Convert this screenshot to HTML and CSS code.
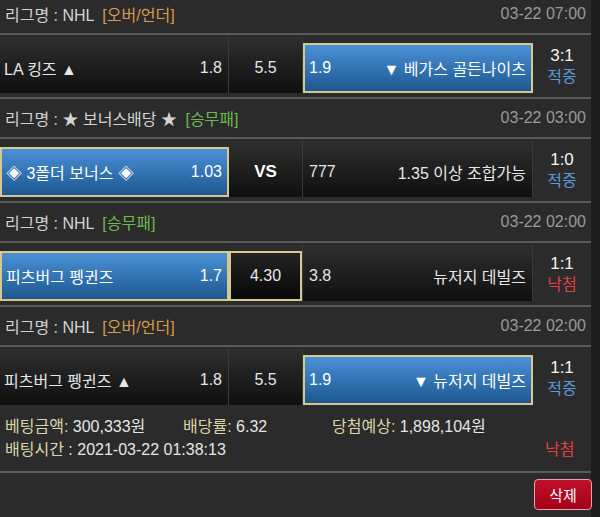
FILE: index.html
```html
<!DOCTYPE html>
<html lang="ko">
<head>
    <meta charset="UTF-8">
    <title>베팅내역</title>
    <link rel="stylesheet" href="styles.css">
</head>
<body>
    <div class="bet-list">
        <!-- 경기 1 -->
        <div class="bet-item">
            <div class="league">
                <span>리그명 : NHL <em class="type-ou">[오버/언더]</em></span>
                <span class="time">03-22 07:00</span>
            </div>
            <div class="match">
                <div class="cell home"><div class="inner"><span>LA 킹즈 ▲</span><span>1.8</span></div></div>
                <div class="cell draw"><div class="inner">5.5</div></div>
                <div class="cell away picked"><div class="inner"><span>1.9</span><span>▼ 베가스 골든나이츠</span></div></div>
                <div class="result"><b>3:1</b><span class="win">적중</span></div>
            </div>
        </div>

        <!-- 경기 2 -->
        <div class="bet-item">
            <div class="league">
                <span>리그명 : ★ 보너스배당 ★ <em class="type-wdl">[승무패]</em></span>
                <span class="time">03-22 03:00</span>
            </div>
            <div class="match">
                <div class="cell home picked"><div class="inner"><span>◈ 3폴더 보너스 ◈</span><span>1.03</span></div></div>
                <div class="cell draw"><div class="inner vs">VS</div></div>
                <div class="cell away"><div class="inner"><span>777</span><span>1.35 이상 조합가능</span></div></div>
                <div class="result"><b>1:0</b><span class="win">적중</span></div>
            </div>
        </div>

        <!-- 경기 3 -->
        <div class="bet-item">
            <div class="league">
                <span>리그명 : NHL <em class="type-wdl">[승무패]</em></span>
                <span class="time">03-22 02:00</span>
            </div>
            <div class="match">
                <div class="cell home picked"><div class="inner"><span>피츠버그 펭귄즈</span><span>1.7</span></div></div>
                <div class="cell draw picked-dark"><div class="inner">4.30</div></div>
                <div class="cell away"><div class="inner"><span>3.8</span><span>뉴저지 데빌즈</span></div></div>
                <div class="result"><b>1:1</b><span class="lose">낙첨</span></div>
            </div>
        </div>

        <!-- 경기 4 -->
        <div class="bet-item">
            <div class="league">
                <span>리그명 : NHL <em class="type-ou">[오버/언더]</em></span>
                <span class="time">03-22 02:00</span>
            </div>
            <div class="match">
                <div class="cell home"><div class="inner"><span>피츠버그 펭귄즈 ▲</span><span>1.8</span></div></div>
                <div class="cell draw"><div class="inner">5.5</div></div>
                <div class="cell away picked"><div class="inner"><span>1.9</span><span>▼ 뉴저지 데빌즈</span></div></div>
                <div class="result"><b>1:1</b><span class="win">적중</span></div>
            </div>
        </div>

        <!-- 요약 -->
        <div class="summary">
            <div class="summary-row">
                <span class="col-amount"><i>베팅금액:</i> 300,333원</span>
                <span class="col-rate"><i>배당률:</i> 6.32</span>
                <span class="col-expect"><i>당첨예상:</i> 1,898,104원</span>
            </div>
            <div class="summary-row">
                <span class="col-time"><i>배팅시간</i> : 2021-03-22 01:38:13</span>
                <span class="final lose">낙첨</span>
            </div>
        </div>
        <div class="actions">
            <button class="delete-button">삭제</button>
        </div>
    </div>
</body>
</html>
```

FILE: styles.css
```css
:root {
    --bg-page: #1d1d1d;
    --bg-list: #2b2b2b;
    --line: #595959;
    --text: #e6e6e6;
    --text-dim: #9a9a9a;
    --gold: #d6c88e;
    --blue-win: #5b9ad6;
    --red-lose: #e2413f;
}

body {
    margin: 0;
    background-color: var(--bg-page);
    font-family: "Liberation Sans", "Noto Sans CJK KR", sans-serif;
    font-size: 16px;
    color: var(--text);
    overflow: hidden;
}

.bet-list {
    width: 591px;
    background-color: var(--bg-list);
    margin-top: -7px;
    padding-bottom: 10px;
}

/* --- 경기 블록 --- */
.bet-item {
    border-top: 2px solid var(--line);
    padding-bottom: 4px;
}

.league {
    height: 38px;
    display: flex;
    justify-content: space-between;
    align-items: center;
    padding: 0 5px;
    border-bottom: 2px solid var(--line);
    color: #d4d4d4;
}

.league em {
    font-style: normal;
    margin-left: 4px;
}

.type-ou { color: #d89a4c; }
.type-wdl { color: #6cba4e; }

.league .time {
    color: var(--text-dim);
}

.match {
    display: grid;
    grid-template-columns: 229px 74px 230px 58px;
    height: 56px;
    margin-top: 2px;
}

.cell {
    display: flex;
    flex-direction: column;
    justify-content: flex-end;
    background: linear-gradient(#2f2f2f, #0f0f0f);
    border-right: 1px solid #3a3a3a;
}

.cell .inner {
    height: 50px;
    display: flex;
    justify-content: space-between;
    align-items: center;
    padding: 0 6px;
    box-sizing: border-box;
}

.cell.draw .inner {
    justify-content: center;
}

.inner.vs {
    font-weight: bold;
    font-size: 17px;
    color: #fff;
}

.cell.picked {
    background: transparent;
    border-right: none;
}

.cell.picked .inner {
    background: linear-gradient(#4b91d6, #1c5890);
    border: 2px solid var(--gold);
    padding: 0 5px 0 4px;
    color: #fff;
}

.cell.picked-dark .inner {
    border: 2px solid var(--gold);
    background: linear-gradient(#222, #080808);
}

.cell.home .inner { padding-left: 4px; }

.result {
    display: flex;
    flex-direction: column;
    align-items: center;
    justify-content: center;
    padding-top: 2px;
    line-height: 21px;
    background-color: var(--bg-list);
}

.result b {
    font-weight: normal;
    font-size: 17px;
    color: #f2f2f2;
}

.win { color: var(--blue-win); }
.lose { color: var(--red-lose); }

/* --- 요약 --- */
.summary {
    padding: 6px 5px 10px;
    border-bottom: 2px solid var(--line);
    line-height: 23px;
}

.summary-row {
    display: flex;
}

.summary-row i {
    font-style: normal;
    color: #ddd5a7;
}

.col-amount { width: 178px; }
.col-rate { width: 149px; }
.col-time { width: 540px; }

.actions {
    display: flex;
    justify-content: flex-end;
    padding: 6px 0 0;
}

.delete-button {
    width: 58px;
    height: 31px;
    margin-right: -1px;
    background: linear-gradient(#c2102a, #a3001a);
    border: 1px solid #e7a3a8;
    border-radius: 4px;
    color: #fff;
    font-family: inherit;
    font-size: 15px;
    cursor: pointer;
}
```
